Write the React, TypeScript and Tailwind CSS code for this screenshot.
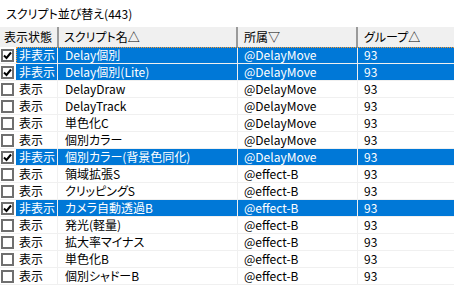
import React from 'react';

type Row = { on: boolean; name: string; owner: string; group: string };

const rows: Row[] = [
  { on: true, name: 'Delay個別', owner: '@DelayMove', group: '93' },
  { on: true, name: 'Delay個別(Lite)', owner: '@DelayMove', group: '93' },
  { on: false, name: 'DelayDraw', owner: '@DelayMove', group: '93' },
  { on: false, name: 'DelayTrack', owner: '@DelayMove', group: '93' },
  { on: false, name: '単色化C', owner: '@DelayMove', group: '93' },
  { on: false, name: '個別カラー', owner: '@DelayMove', group: '93' },
  { on: true, name: '個別カラー(背景色同化)', owner: '@DelayMove', group: '93' },
  { on: false, name: '領域拡張S', owner: '@effect-B', group: '93' },
  { on: false, name: 'クリッピングS', owner: '@effect-B', group: '93' },
  { on: true, name: 'カメラ自動透過B', owner: '@effect-B', group: '93' },
  { on: false, name: '発光(軽量)', owner: '@effect-B', group: '93' },
  { on: false, name: '拡大率マイナス', owner: '@effect-B', group: '93' },
  { on: false, name: '単色化B', owner: '@effect-B', group: '93' },
  { on: false, name: '個別シャドーB', owner: '@effect-B', group: '93' },
];

function Check({ checked }: { checked: boolean }) {
  return (
    <div className="flex h-[13px] w-[13px] items-center justify-center border-2 border-[#6f6f6f] bg-white">
      {checked && (
        <svg width="9" height="9" viewBox="0 0 9 9">
          <path d="M1 4.5 L3.5 7 L8 1.5" fill="none" stroke="#000" strokeWidth="2" />
        </svg>
      )}
    </div>
  );
}

export default function App() {
  return (
    <div
      className="h-[289px] w-[454px] overflow-hidden bg-white text-[12px] text-black [font-feature-settings:'palt']"
      style={{ fontFamily: '"Noto Sans CJK JP", "Noto Sans", sans-serif' }}
    >
      <div className="flex h-[27px] items-center pl-[6px] leading-none">スクリプト並び替え(443)</div>

      {/* header */}
      <div className="flex h-[20px] bg-[#f0f0f0] leading-none">
        <div className="flex w-[59px] items-center border-r-2 border-[#9a9a9a] pl-[4px]">表示状態</div>
        <div className="flex w-[179px] items-center border-r-2 border-[#9a9a9a] pl-[5px]">スクリプト名△</div>
        <div className="flex w-[120px] items-center border-r-2 border-[#9a9a9a] pl-[6px]">所属▽</div>
        <div className="flex flex-1 items-center pl-[6px]">グループ△</div>
      </div>

      {/* rows */}
      {rows.map((r, i) => {
        const sel = r.on ? 'bg-[#0078d7] text-white' : '';
        return (
          <div key={i} className="flex h-[17px] border-b border-[#f0f0f0] leading-none">
            <div className="flex w-[58px] items-center border-r border-[#f0f0f0]">
              <div className="flex w-[16px] items-center pl-[1px]">
                <Check checked={r.on} />
              </div>
              <div className={`flex h-full flex-1 items-center pl-[3px] ${sel}`}>{r.on ? '非表示' : '表示'}</div>
            </div>
            <div className={`relative flex flex-1 ${sel}`}>
              <div className="flex w-[180px] items-center border-r border-[#f0f0f0] pl-[7px]">{r.name}</div>
              <div className="flex w-[120px] items-center border-r border-[#f0f0f0] pl-[6px]">{r.owner}</div>
              <div className="flex flex-1 items-center pl-[6px]">{r.group}</div>
              {i === 0 && (
                <div className="pointer-events-none absolute inset-y-0 left-[-42px] right-0 border-t border-l border-dotted border-[#ff9a2e]" />
              )}
            </div>
          </div>
        );
      })}
    </div>
  );
}
